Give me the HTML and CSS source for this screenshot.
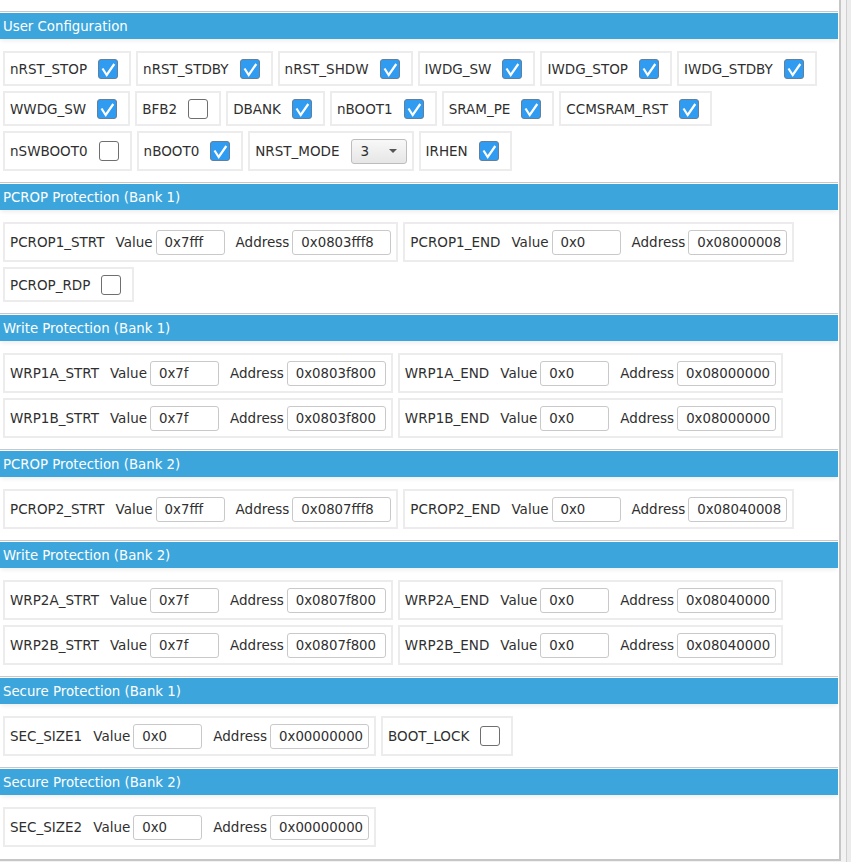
FILE: index.html
```html
<!DOCTYPE html>
<html>
<head>
<meta charset="utf-8">
<title>Option Bytes</title>
<link rel="stylesheet" href="styles.css">
</head>
<body>
<div class="window">
  <div class="pane">

    <section class="group">
      <div class="head">User Configuration</div>
      <div class="body">
        <div class="row">
          <div class="item"><span>nRST_STOP</span><span class="cb on"><svg viewBox="1 1 18 18"><path d="M4.5 9.5 L8.7 16 L16.3 5"/></svg></span></div>
          <div class="item"><span>nRST_STDBY</span><span class="cb on"><svg viewBox="1 1 18 18"><path d="M4.5 9.5 L8.7 16 L16.3 5"/></svg></span></div>
          <div class="item"><span>nRST_SHDW</span><span class="cb on"><svg viewBox="1 1 18 18"><path d="M4.5 9.5 L8.7 16 L16.3 5"/></svg></span></div>
          <div class="item"><span>IWDG_SW</span><span class="cb on"><svg viewBox="1 1 18 18"><path d="M4.5 9.5 L8.7 16 L16.3 5"/></svg></span></div>
          <div class="item"><span>IWDG_STOP</span><span class="cb on"><svg viewBox="1 1 18 18"><path d="M4.5 9.5 L8.7 16 L16.3 5"/></svg></span></div>
          <div class="item"><span>IWDG_STDBY</span><span class="cb on"><svg viewBox="1 1 18 18"><path d="M4.5 9.5 L8.7 16 L16.3 5"/></svg></span></div>
        </div>
        <div class="row">
          <div class="item"><span>WWDG_SW</span><span class="cb on"><svg viewBox="1 1 18 18"><path d="M4.5 9.5 L8.7 16 L16.3 5"/></svg></span></div>
          <div class="item"><span>BFB2</span><span class="cb"></span></div>
          <div class="item"><span>DBANK</span><span class="cb on"><svg viewBox="1 1 18 18"><path d="M4.5 9.5 L8.7 16 L16.3 5"/></svg></span></div>
          <div class="item"><span>nBOOT1</span><span class="cb on"><svg viewBox="1 1 18 18"><path d="M4.5 9.5 L8.7 16 L16.3 5"/></svg></span></div>
          <div class="item"><span>SRAM_PE</span><span class="cb on"><svg viewBox="1 1 18 18"><path d="M4.5 9.5 L8.7 16 L16.3 5"/></svg></span></div>
          <div class="item"><span>CCMSRAM_RST</span><span class="cb on"><svg viewBox="1 1 18 18"><path d="M4.5 9.5 L8.7 16 L16.3 5"/></svg></span></div>
        </div>
        <div class="row">
          <div class="item"><span>nSWBOOT0</span><span class="cb"></span></div>
          <div class="item"><span>nBOOT0</span><span class="cb on"><svg viewBox="1 1 18 18"><path d="M4.5 9.5 L8.7 16 L16.3 5"/></svg></span></div>
          <div class="item f"><span>NRST_MODE</span><div class="combo"><span>3</span><span class="arrow"></span></div></div>
          <div class="item"><span>IRHEN</span><span class="cb on"><svg viewBox="1 1 18 18"><path d="M4.5 9.5 L8.7 16 L16.3 5"/></svg></span></div>
        </div>
      </div>
    </section>

    <section class="group">
      <div class="head">PCROP Protection (Bank 1)</div>
      <div class="body">
        <div class="row">
          <div class="item f"><span>PCROP1_STRT</span><div class="pair"><span>Value</span><input class="inp" value="0x7fff" readonly></div><div class="pair"><span>Address</span><input class="inp w" value="0x0803fff8" readonly></div></div>
          <div class="item f"><span>PCROP1_END</span><div class="pair"><span>Value</span><input class="inp" value="0x0" readonly></div><div class="pair"><span>Address</span><input class="inp w" value="0x08000008" readonly></div></div>
        </div>
        <div class="row">
          <div class="item"><span>PCROP_RDP</span><span class="cb"></span></div>
        </div>
      </div>
    </section>

    <section class="group">
      <div class="head">Write Protection (Bank 1)</div>
      <div class="body">
        <div class="row">
          <div class="item f"><span>WRP1A_STRT</span><div class="pair"><span>Value</span><input class="inp" value="0x7f" readonly></div><div class="pair"><span>Address</span><input class="inp w" value="0x0803f800" readonly></div></div>
          <div class="item f"><span>WRP1A_END</span><div class="pair"><span>Value</span><input class="inp" value="0x0" readonly></div><div class="pair"><span>Address</span><input class="inp w" value="0x08000000" readonly></div></div>
        </div>
        <div class="row">
          <div class="item f"><span>WRP1B_STRT</span><div class="pair"><span>Value</span><input class="inp" value="0x7f" readonly></div><div class="pair"><span>Address</span><input class="inp w" value="0x0803f800" readonly></div></div>
          <div class="item f"><span>WRP1B_END</span><div class="pair"><span>Value</span><input class="inp" value="0x0" readonly></div><div class="pair"><span>Address</span><input class="inp w" value="0x08000000" readonly></div></div>
        </div>
      </div>
    </section>

    <section class="group">
      <div class="head">PCROP Protection (Bank 2)</div>
      <div class="body">
        <div class="row">
          <div class="item f"><span>PCROP2_STRT</span><div class="pair"><span>Value</span><input class="inp" value="0x7fff" readonly></div><div class="pair"><span>Address</span><input class="inp w" value="0x0807fff8" readonly></div></div>
          <div class="item f"><span>PCROP2_END</span><div class="pair"><span>Value</span><input class="inp" value="0x0" readonly></div><div class="pair"><span>Address</span><input class="inp w" value="0x08040008" readonly></div></div>
        </div>
      </div>
    </section>

    <section class="group">
      <div class="head">Write Protection (Bank 2)</div>
      <div class="body">
        <div class="row">
          <div class="item f"><span>WRP2A_STRT</span><div class="pair"><span>Value</span><input class="inp" value="0x7f" readonly></div><div class="pair"><span>Address</span><input class="inp w" value="0x0807f800" readonly></div></div>
          <div class="item f"><span>WRP2A_END</span><div class="pair"><span>Value</span><input class="inp" value="0x0" readonly></div><div class="pair"><span>Address</span><input class="inp w" value="0x08040000" readonly></div></div>
        </div>
        <div class="row">
          <div class="item f"><span>WRP2B_STRT</span><div class="pair"><span>Value</span><input class="inp" value="0x7f" readonly></div><div class="pair"><span>Address</span><input class="inp w" value="0x0807f800" readonly></div></div>
          <div class="item f"><span>WRP2B_END</span><div class="pair"><span>Value</span><input class="inp" value="0x0" readonly></div><div class="pair"><span>Address</span><input class="inp w" value="0x08040000" readonly></div></div>
        </div>
      </div>
    </section>

    <section class="group">
      <div class="head">Secure Protection (Bank 1)</div>
      <div class="body">
        <div class="row">
          <div class="item f"><span>SEC_SIZE1</span><div class="pair"><span>Value</span><input class="inp" value="0x0" readonly></div><div class="pair"><span>Address</span><input class="inp w" value="0x00000000" readonly></div></div>
          <div class="item"><span>BOOT_LOCK</span><span class="cb"></span></div>
        </div>
      </div>
    </section>

    <section class="group">
      <div class="head">Secure Protection (Bank 2)</div>
      <div class="body">
        <div class="row">
          <div class="item f"><span>SEC_SIZE2</span><div class="pair"><span>Value</span><input class="inp" value="0x0" readonly></div><div class="pair"><span>Address</span><input class="inp w" value="0x00000000" readonly></div></div>
        </div>
      </div>
    </section>

  </div>
  <div class="scroll"><div class="s-a"></div><div class="s-line"></div><div class="s-b"></div></div>
</div>
</body>
</html>
```

FILE: styles.css
```css
* {
  box-sizing: border-box;
}

html,
body {
  margin: 0;
  padding: 0;
}

body {
  width: 851px;
  height: 862px;
  overflow: hidden;
  background: #f2f2f2;
  font-family: "DejaVu Sans", "Liberation Sans", sans-serif;
  font-size: 13.5px;
  color: #2f2f2f;
}

.window {
  display: flex;
  height: 862px;
}

.pane {
  width: 841px;
  height: 861px;
  flex: none;
  background: #ffffff;
  border-right: 2px solid #c6c6c6;
  border-bottom: 2px solid #c6c6c6;
  padding-top: 11px;
  padding-right: 1px;
  overflow: hidden;
}

.scroll {
  flex: 1;
  display: flex;
}

.s-a {
  width: 5px;
  background: #f3f3f3;
}

.s-line {
  width: 1px;
  background: #d0d0d0;
}

.s-b {
  flex: 1;
  background: #ececec;
}

.head {
  height: 28px;
  border-top: 1px solid #c8c8c8;
  padding: 1px 0 0 3px;
  background: linear-gradient(#ffffff 0 1px, #3ca6dc 1px);
  color: #ffffff;
  font-size: 13.3px;
  line-height: 27px;
  box-shadow: 0 3px 4px -1px rgba(0, 0, 0, 0.07);
  position: relative;
}

.body {
  display: flex;
  flex-direction: column;
  gap: 5px;
  padding: 12px 0 11px 3px;
}

.row {
  display: flex;
  gap: 5px;
}

.item {
  display: flex;
  align-items: center;
  gap: 11px;
  min-height: 35px;
  border: 2px solid #ececec;
  padding: 0 11px 0 5px;
  white-space: nowrap;
}

.item.f {
  min-height: 40px;
  padding-right: 5px;
}

.pair {
  display: flex;
  align-items: center;
  gap: 3px;
}

.inp {
  width: 69px;
  height: 25px;
  border: 1px solid #c9c9c9;
  border-radius: 3px;
  padding: 0 4px 0 8px;
  font-family: inherit;
  font-size: 13.3px;
  color: #2f2f2f;
  background: #ffffff;
  outline: none;
  margin: 0;
}

.inp.w {
  width: 99px;
}

.cb {
  width: 20px;
  height: 20px;
  flex: none;
  display: flex;
  border: 1px solid #6f6f6f;
  border-radius: 3px;
  background: #ffffff;
}

.cb.on {
  background: #2f9bf1;
  border-color: #62809b;
}

.cb svg {
  width: 18px;
  height: 18px;
  display: block;
}

.cb path {
  fill: none;
  stroke: #ffffff;
  stroke-width: 2.2;
  stroke-linejoin: miter;
}

.combo {
  width: 56px;
  height: 25px;
  display: flex;
  align-items: center;
  justify-content: space-between;
  padding: 0 9px 0 9px;
  border: 1px solid #bdbdbd;
  border-radius: 3px;
  background: linear-gradient(#f8f8f8, #e6e6e6);
}

.arrow {
  width: 0;
  height: 0;
  border-left: 4px solid transparent;
  border-right: 4px solid transparent;
  border-top: 4px solid #555555;
}
```
